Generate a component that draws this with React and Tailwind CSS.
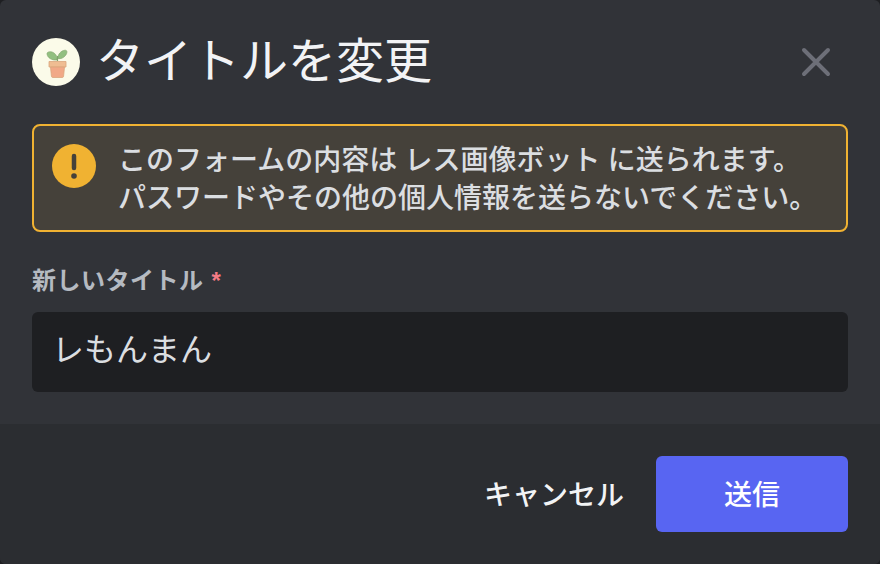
const FONT = { fontFamily: '"Noto Sans", "Noto Sans CJK JP", sans-serif' };

function PlantIcon() {
  return (
    <div className="flex h-12 w-12 shrink-0 items-center justify-center rounded-full bg-[#fbfbe9]">
      <svg width="28" height="32" viewBox="0 0 28 32">
        <path d="M15.500 15 V10" stroke="#7fa36c" strokeWidth="1.2" fill="none" />
        <path d="M15 14 C10 14.500 5.500 12 5 8 C4.800 5.500 9 4.800 12 7 C14.500 8.800 15.300 11 15 14Z" fill="#92bf80" stroke="#7fa36c" strokeWidth="0.6" />
        <path d="M16 12.500 C15.500 8.500 19 4.500 23 4.200 C25.500 4 25.500 7 23.500 9.500 C21.500 12 19 13 16 12.500Z" fill="#92bf80" stroke="#7fa36c" strokeWidth="0.6" />
        <path d="M7 15.500 H24 V21 H7Z" fill="#efbd92" stroke="#dba67c" strokeWidth="0.8" />
        <path d="M8.500 21 H22.500 L21.600 30 C21.500 31 21 31.500 20 31.500 H11 C10 31.500 9.500 31 9.400 30Z" fill="#f1a987" stroke="#dba67c" strokeWidth="0.8" />
      </svg>
    </div>
  );
}

export default function App() {
  return (
    <div className="h-[564px] w-[880px] bg-[#1e1f22]">
      <div className="flex h-full flex-col overflow-hidden rounded-[6px] bg-[#313338]" style={FONT}>
        {/* Header */}
        <div className="flex items-center px-8 pt-7">
          <PlantIcon />
          <h1 className="ml-4 flex-1 pb-1 text-[48px] leading-[64px] font-normal text-[#f2f3f5]">タイトルを変更</h1>
          <svg width="32" height="32" viewBox="0 0 32 32" className="mr-4 shrink-0">
            <path d="M4 4 L28 28 M28 4 L4 28" stroke="#6d6f78" strokeWidth="4" strokeLinecap="round" />
          </svg>
        </div>

        {/* Warning */}
        <div className="mx-8 mt-[28px] flex h-[108px] items-center rounded-lg border-2 border-[#f0b232] bg-[#45413a] pr-3 pl-[18px]">
          <div className="mt-[18px] mb-auto flex h-11 w-11 shrink-0 items-center justify-center rounded-full bg-[#f0b232]">
            <svg width="8" height="28" viewBox="0 0 8 28">
              <path d="M4 4 V16" stroke="#45413a" strokeWidth="4.500" strokeLinecap="round" />
              <circle cx="4" cy="24" r="2.800" fill="#45413a" />
            </svg>
          </div>
          <div className="ml-[22px] text-[28px] leading-[38px] font-medium whitespace-nowrap text-[#dbdee1]">
            <p>このフォームの内容は レス画像ボット に送られます。</p>
            <p>パスワードやその他の個人情報を送らないでください。</p>
          </div>
        </div>

        {/* Field */}
        <div className="mx-8 mt-7 flex-1">
          <label className="block text-[24px] leading-[40px] font-bold tracking-[0.02em] text-[#b5bac1]">
            新しいタイトル
            <span className="ml-2 text-[#f47b85]" style={{ fontFamily: '"Liberation Sans", sans-serif' }}>*</span>
          </label>
          <div className="mt-[11px] flex h-20 items-center rounded-md bg-[#1e1f22] px-5 pb-1.5 text-[32px] text-[#dbdee1]">レもんまん</div>
        </div>

        {/* Footer */}
        <div className="flex h-[140px] items-center justify-end bg-[#2b2d31] px-8">
          <button className="mr-8 text-[28px] font-medium text-[#f2f3f5]">キャンセル</button>
          <button className="h-[76px] w-[192px] rounded-md bg-[#5865f2] text-[28px] font-medium text-white">送信</button>
        </div>
      </div>
    </div>
  );
}
